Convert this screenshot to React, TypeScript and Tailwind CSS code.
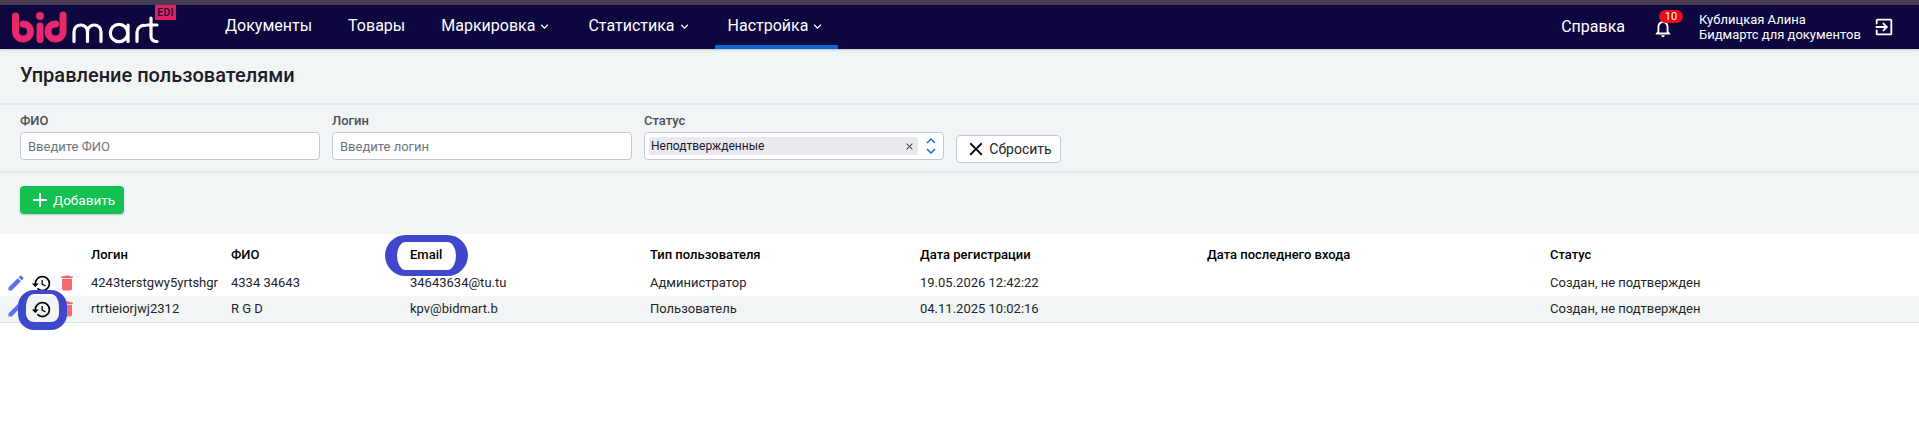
import { MdAdd, MdClose, MdDelete, MdEdit, MdExitToApp, MdHistory, MdKeyboardArrowDown, MdKeyboardArrowUp, MdNotificationsNone } from 'react-icons/md'

const rows = [
  { login: '4243terstgwy5yrtshgr', name: '4334 34643', email: '34643634@tu.tu', type: 'Администратор', date: '19.05.2026 12:42:22', status: 'Создан, не подтвержден' },
  { login: 'rtrtieiorjwj2312', name: 'R G D', email: 'kpv@bidmart.b', type: 'Пользователь', date: '04.11.2025 10:02:16', status: 'Создан, не подтвержден' },
]

const columns = 'grid grid-cols-[91px_140px_179px_240px_270px_287px_343px_1fr] items-center'

function Logo() {
  return (
    <div className="relative w-[200px] h-[44px] shrink-0">
      <svg width="150" height="44" viewBox="0 0 150 44" fill="none" strokeLinecap="round" strokeLinejoin="round">
        <g stroke="#e8286b" strokeWidth="7">
          <path d="M3.5 11v15.5a7.5 7.5 0 1 0 7.5-7.5" />
          <path d="M28 21v13.5" />
          <path d="M51 10v16.5a7.5 7.5 0 1 1-7.5-7.5" />
        </g>
        <circle cx="28" cy="11" r="4" fill="#e8286b" />
        <g stroke="#ffffff" strokeWidth="3.2">
          <path d="M62 36.5V26.75a6.75 6.75 0 0 1 13.5 0V36.5M75.5 26.75a6.75 6.75 0 0 1 13.5 0V36.5" />
          <circle cx="107" cy="28" r="8.7" />
          <path d="M116 20v16.5" />
          <path d="M125 36.5V27a7 7 0 0 1 8-6.5" />
          <path d="M139 13v18a5 5 0 0 0 5 5.5h1M135 20h10" />
        </g>
      </svg>
      <span className="absolute left-[143px] top-0 w-[21px] h-[15px] bg-[#e0215f] text-[#0d063f] text-[10px] font-medium leading-[15px] text-center tracking-[0.5px]">EDI</span>
    </div>
  )
}

function NavItem({ label, arrow, active }: { label: string; arrow?: boolean; active?: boolean }) {
  return (
    <div className={`h-[44px] px-[13px] flex items-center gap-[2px] border-b-4 pt-[2px] ${active ? 'border-[#0b66cf]' : 'border-transparent'}`}>
      <span>{label}</span>
      {arrow && <MdKeyboardArrowDown size={15} />}
    </div>
  )
}

function Field({ label, placeholder }: { label: string; placeholder: string }) {
  return (
    <div className="w-[300px] flex flex-col">
      <label className="text-[13px] font-medium leading-[16px] text-[#495057] mb-[3px]">{label}</label>
      <input
        placeholder={placeholder}
        className="h-[28px] px-[7px] bg-white border border-[#c4c6d8] rounded-[4px] text-[13px] outline-none placeholder:text-[#6c757d]"
      />
    </div>
  )
}

export default function App() {
  return (
    <div className="min-h-screen bg-white font-['Roboto',sans-serif] text-[#212529]">
      <div className="h-[5px] bg-[#463d50]" />
      <header className="h-[44px] bg-[#0d063f] text-white text-[16px] flex items-center pl-[12px] pr-[24px] shadow-[0_1px_2px_rgba(0,0,0,0.2)] relative">
        <Logo />
        <nav className="flex gap-[10px]">
          <NavItem label="Документы" />
          <NavItem label="Товары" />
          <NavItem label="Маркировка" arrow />
          <NavItem label="Статистика" arrow />
          <NavItem label="Настройка" arrow active />
        </nav>
        <div className="ml-auto flex items-center">
          <span>Справка</span>
          <div className="relative ml-[27px] mr-[25px] mt-[1px]">
            <MdNotificationsNone size={22} />
            <span className="absolute left-[7px] top-[-7px] w-[24px] h-[13px] rounded-full bg-[#ee0a17] text-[11px] leading-[13px] text-center">10</span>
          </div>
          <div className="text-[13px] leading-[15px] w-[174px]">
            <div>Кублицкая Алина</div>
            <div>Бидмартс для документов</div>
          </div>
          <MdExitToApp size={22} />
        </div>
      </header>

      <main className="bg-[#f2f5f6]">
        <h1 className="h-[56px] pb-[2px] pl-[20px] flex items-center text-[20px] font-medium text-[#1c2024] border-b-2 border-[#e6e9eb]">Управление пользователями</h1>
        <div className="h-[68px] pl-[20px] pt-[8px] flex items-start gap-[12px] border-b-2 border-[#e6e9eb]">
          <Field label="ФИО" placeholder="Введите ФИО" />
          <Field label="Логин" placeholder="Введите логин" />
          <div className="w-[300px] flex flex-col">
            <label className="text-[13px] font-medium leading-[16px] text-[#495057] mb-[3px]">Статус</label>
            <div className="h-[28px] bg-white border border-[#c4c6d8] rounded-[4px] flex items-center pl-[4px] pr-[3px]">
              <div className="w-[269px] h-[18px] rounded-[2px] bg-[#e9eaee] flex items-center justify-between pl-[2px] pr-[3px] text-[12px] text-[#1c1530]">
                <span>Неподтвержденные</span>
                <MdClose size={11} className="text-[#444]" />
              </div>
              <div className="ml-auto flex flex-col text-[#0b6ed4] -space-y-[8px]">
                <MdKeyboardArrowUp size={18} />
                <MdKeyboardArrowDown size={18} />
              </div>
            </div>
          </div>
          <button className="w-[105px] h-[28px] mt-[22px] bg-white border border-[#c4c6d8] rounded-[4px] flex items-center justify-center gap-[2px] text-[14px] text-[#212529]">
            <MdClose size={22} className="text-black" />
            Сбросить
          </button>
        </div>
        <div className="h-[61px] pl-[20px] pt-[13px]">
          <button className="w-[104px] h-[28px] bg-[#12c152] rounded-[4px] flex items-center justify-center gap-[1px] pr-[1px] text-[13.5px] text-white shadow-[0_1px_2px_rgba(0,0,0,0.2)]">
            <MdAdd size={24} />
            Добавить
          </button>
        </div>
      </main>

      <section className="relative text-[13px] text-[#212529]">
        <div className={`${columns} h-[36px] pt-[5px] font-medium text-black`}>
          <span />
          <span>Логин</span>
          <span>ФИО</span>
          <span>Email</span>
          <span>Тип пользователя</span>
          <span>Дата регистрации</span>
          <span>Дата последнего входа</span>
          <span>Статус</span>
        </div>
        {rows.map((r, i) => (
          <div key={r.login} className={`${columns} ${i === 1 ? 'bg-[#f2f5f6] border-b border-[#dcdfe2] h-[27px]' : 'h-[26px]'}`}>
            <div className="flex items-center pl-[6px]">
              <MdEdit size={20} className="text-[#5b6ef0]" />
              <MdHistory size={21} className="text-black ml-[5px]" />
              <MdDelete size={20} className="text-[#f4696f] ml-[5px]" />
            </div>
            <span>{r.login}</span>
            <span>{r.name}</span>
            <span>{r.email}</span>
            <span>{r.type}</span>
            <span>{r.date}</span>
            <span />
            <span>{r.status}</span>
          </div>
        ))}
        <div className="absolute left-[385px] top-[1px] w-[83px] h-[41px] rounded-[22px] border-x-[12px] border-t-[7px] border-b-[6px] border-[#3f48cc]" />
        <div className="absolute left-[18px] top-[56px] w-[49px] h-[40px] rounded-[16px] border-x-[8px] border-t-[4px] border-b-[8px] border-[#3f48cc]" />
      </section>
    </div>
  )
}
